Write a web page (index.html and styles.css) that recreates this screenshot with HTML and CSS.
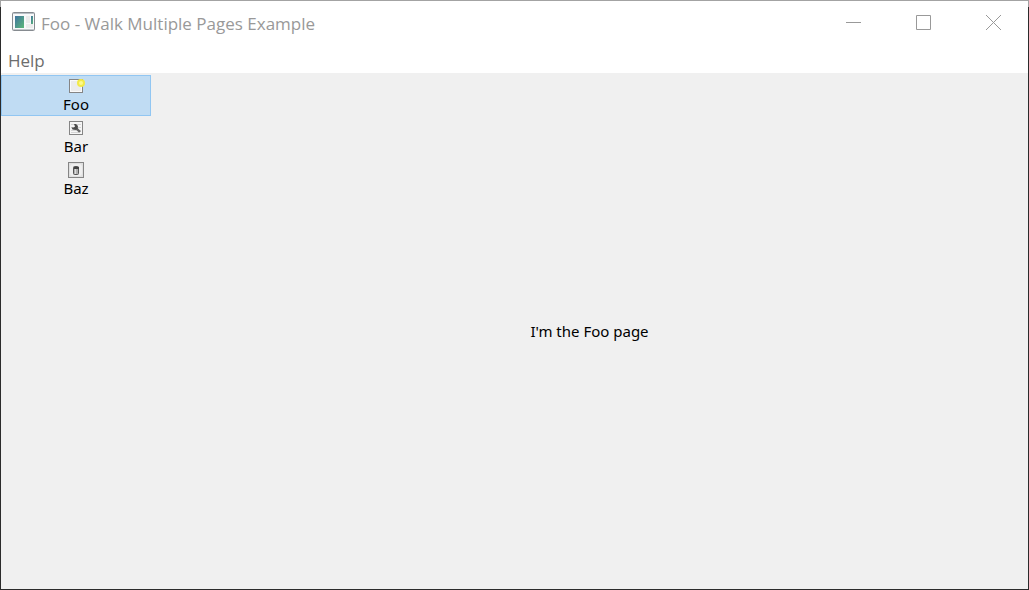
FILE: index.html
```html
<!DOCTYPE html>
<html lang="en">
  <head>
    <meta charset="UTF-8" />
    <meta name="viewport" content="width=device-width, initial-scale=1.0" />
    <title>Foo - Walk Multiple Pages Example</title>
    <link rel="stylesheet" href="styles.css">
  </head>
  <body>
    <div class="window">
      <header class="title-bar">
        <svg class="app-icon" width="24" height="20" viewBox="0 0 24 20">
          <defs>
            <linearGradient id="pane" x1="0" y1="0" x2="1" y2="1">
              <stop offset="0" stop-color="#3f73a0" />
              <stop offset="1" stop-color="#5cb878" />
            </linearGradient>
          </defs>
          <rect x="0.5" y="0.5" width="22" height="18" rx="1" fill="#f8f9fa" stroke="#868b90" />
          <path d="M1 1.5h21" stroke="#b9c0c6" />
          <path d="M1 17.5h21" stroke="#c4c8cc" />
          <rect x="3" y="4" width="9" height="12" fill="url(#pane)" />
          <rect x="14" y="4" width="4" height="7" fill="#ebebeb" />
          <rect x="14" y="12" width="7" height="4" fill="#ececec" />
          <rect x="19" y="4" width="2" height="8" fill="url(#pane)" />
        </svg>
        <h1 class="title">Foo - Walk Multiple Pages Example</h1>
        <div class="controls">
          <button type="button" aria-label="Minimize">
            <svg width="15" height="15" viewBox="0 0 15 15"><path d="M0 7.5h15" /></svg>
          </button>
          <button type="button" aria-label="Maximize">
            <svg width="15" height="15" viewBox="0 0 15 15"><path d="M.5 .5h14v14h-14z" /></svg>
          </button>
          <button type="button" aria-label="Close">
            <svg width="15" height="15" viewBox="0 0 15 15"><path d="M0 0l15 15M15 0l-15 15" /></svg>
          </button>
        </div>
      </header>

      <nav class="menu-bar">
        <button type="button">Help</button>
      </nav>

      <div class="content">
        <nav class="page-list">
          <button type="button" class="page-item selected" aria-current="page">
            <svg width="18" height="16" viewBox="0 0 18 16">
              <rect x="2.5" y="1.5" width="13" height="13" fill="#ececec" stroke="#858585" />
              <rect x="3.5" y="2.5" width="11" height="11" fill="none" stroke="#fafafa" />
              <circle cx="14" cy="5" r="4" fill="#f3ea48" />
              <circle cx="14" cy="5" r="2" fill="#fdfa8c" />
            </svg>
            <span>Foo</span>
          </button>
          <button type="button" class="page-item">
            <svg width="18" height="16" viewBox="0 0 18 16">
              <rect x="2.5" y="1.5" width="13" height="13" fill="#f6f6f6" stroke="#858585" />
              <path d="M4 4.5h10M4 7.5h10M4 10.5h10M4 12.5h8" stroke="#d4d4d4" />
              <path d="M8 7l5 5" stroke="#666" stroke-width="2.4" />
              <path d="M7 4l2 0 2 2-.5 3-2 1-3-.5-1-2 2.500 0 1-1z" fill="#4c4c4c" />
            </svg>
            <span>Bar</span>
          </button>
          <button type="button" class="page-item">
            <svg width="18" height="16" viewBox="0 0 18 16">
              <rect x="1.5" y="0.5" width="15" height="15" fill="#e0e0e0" stroke="#858585" />
              <rect x="3" y="2" width="12" height="12" rx="3" fill="#efefef" />
              <rect x="6.5" y="4.5" width="5" height="8" rx="1" fill="#b0b0b0" stroke="#555" />
              <path d="M7 5h5v2h-5z" fill="#444" />
              <path d="M8.5 7v5" stroke="#ddd" />
            </svg>
            <span>Baz</span>
          </button>
        </nav>
        <main class="page">I'm the Foo page</main>
      </div>
    </div>
  </body>
</html>
```
FILE: styles.css
```css
* {
  box-sizing: border-box;
}
body {
  margin: 0;
  font-family: "Noto Sans", "Open Sans", sans-serif;
  font-size: 15px;
  color: #000;
}
button {
  padding: 0;
  border: 0;
  background: none;
  font: inherit;
  color: inherit;
}
.window {
  display: flex;
  flex-direction: column;
  min-height: 100vh;
  border: 1px solid #2b2b2b;
  border-image: linear-gradient(#a3a3a3 7px, #2b2b2b 7px) 1;
  background-color: #f0f0f0;
}
.title-bar {
  display: flex;
  align-items: center;
  height: 42px;
  padding-left: 11px;
  background-color: #fff;
}
.app-icon {
  flex: none;
}
.title {
  flex: 1;
  margin: 0;
  padding-top: 2px;
  padding-left: 5px;
  font-family: "Open Sans", sans-serif;
  font-size: 17px;
  font-weight: 400;
  color: #999;
}
.controls {
  display: flex;
  align-self: stretch;
}
.controls button {
  display: flex;
  align-items: center;
  justify-content: center;
  width: 70px;
}
.controls path {
  fill: none;
  stroke: #999;
}
.menu-bar {
  display: flex;
  height: 30px;
  padding-top: 4px;
  padding-left: 7px;
  background-color: #fff;
  font-family: "Open Sans", sans-serif;
  font-size: 17px;
  color: #6d6d6d;
}
.content {
  display: flex;
  flex: 1;
}
.page-list {
  display: flex;
  flex-direction: column;
  gap: 1px;
  width: 150px;
  padding-top: 2px;
}
.page-item {
  display: flex;
  flex-direction: column;
  align-items: center;
  height: 41px;
  padding-top: 2px;
  border: 1px solid transparent;
  line-height: 20px;
}
.page-item svg {
  flex: none;
}
.page-item.selected {
  border-color: #91c6f2;
  background-color: #c0dcf3;
}
.page {
  display: flex;
  flex: 1;
  align-items: center;
  justify-content: center;
}
```
